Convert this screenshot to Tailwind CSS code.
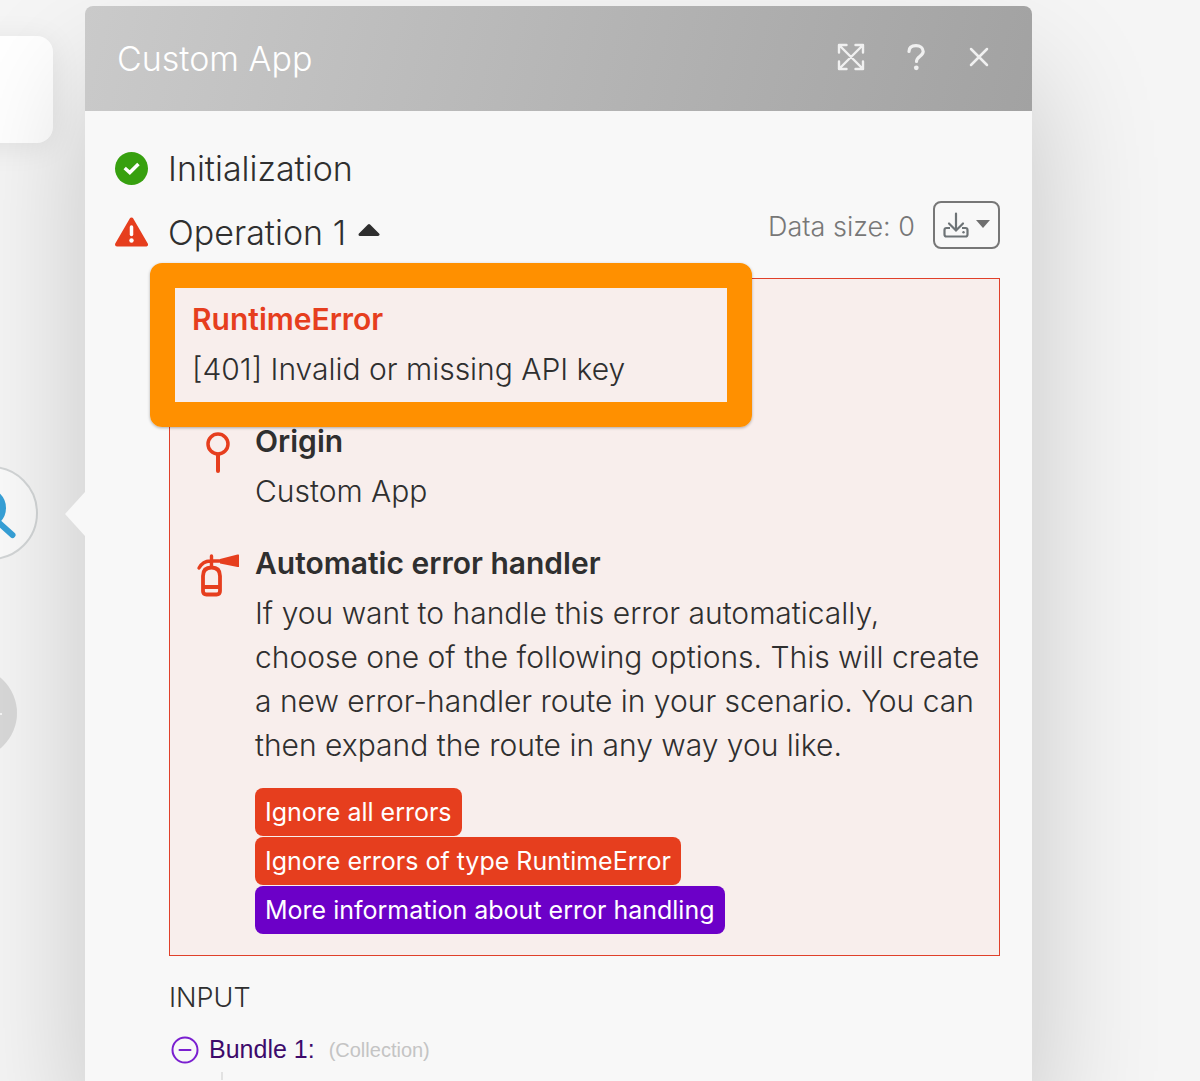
<!DOCTYPE html>
<html lang="en">
<head>
    <meta charset="UTF-8">
    <meta name="viewport" content="width=device-width, initial-scale=1.0">
    <title>Custom App</title>
    <script src="https://cdn.jsdelivr.net/npm/@tailwindcss/browser@4"></script>
</head>
<body class="relative min-h-screen flex bg-[#f5f5f5] text-[#2f2f2f] font-['Inter',sans-serif] overflow-x-hidden">
    <!-- scenario canvas behind the panel -->
    <div class="absolute -left-20 top-9 w-[133px] h-[107px] rounded-2xl bg-white shadow-[0_4px_30px_rgba(0,0,0,0.08)]"></div>
    <div class="absolute -left-14 top-[466px] size-[94px] rounded-full bg-[#fbfbfb] border-2 border-[#d3d6d7]"></div>
    <svg class="absolute left-0 top-[480px] w-5 h-[70px]" viewBox="0 0 20 70" fill="none">
        <circle cx="-14" cy="28" r="16" stroke="#37a1d8" stroke-width="8"/>
        <path d="M-2 42L12.500 55" stroke="#37a1d8" stroke-width="6" stroke-linecap="round"/>
    </svg>
    <div class="absolute -left-[75px] top-[667px] size-[92px] rounded-full bg-[#d9d9d9]"></div>
    <div class="absolute left-0 top-[713px] size-[2px] rounded-full bg-white"></div>

    <main class="relative flex-1 flex flex-col mt-[6px] ml-[85px] mr-[168px] rounded-t-lg bg-[#f8f8f8] shadow-[0_70px_130px_rgba(0,0,0,0.2)]">
        <div class="absolute -left-5 top-[486px] w-5 h-[44px] bg-[#f8f8f8] [clip-path:polygon(100%_0,0_50%,100%_100%)]"></div>

        <header class="flex items-center justify-between h-[105px] pl-8 pr-[39px] rounded-t-lg bg-linear-[105deg] from-[#cacaca] to-[#a2a2a2] text-white">
            <h1 class="text-[34px] font-light">Custom App</h1>
            <div class="flex items-center gap-9 pb-[3px] text-[#f0f0f0]">
                <button type="button" aria-label="Expand">
                    <svg class="size-7" viewBox="0 0 28 28" fill="none" stroke="currentColor" stroke-width="2.400" stroke-linejoin="round" stroke-linecap="round">
                        <path d="M2 2L26 26M26 2L2 26M2 9.500V2H9.500M18.500 2H26V9.500M26 18.500V26H18.500M9.500 26H2V18.500"/>
                    </svg>
                </button>
                <button type="button" aria-label="Help">
                    <svg class="size-7" viewBox="0 0 28 28" fill="none">
                        <path d="M8 8.500C8 4.500 11 2.600 15 2.600C19 2.600 22.200 4.800 22.200 8.600C22.200 13 15.500 13.500 15.500 18.500" stroke="currentColor" stroke-width="3.200" stroke-linecap="round"/>
                        <circle cx="15.300" cy="24.800" r="2.400" fill="currentColor"/>
                    </svg>
                </button>
                <button type="button" aria-label="Close">
                    <svg class="size-7" viewBox="0 0 28 28" fill="none" stroke="currentColor" stroke-width="2.500" stroke-linecap="round">
                        <path d="M6 6L22 22M22 6L6 22"/>
                    </svg>
                </button>
            </div>
        </header>

        <section class="pl-[30px] pr-8 pt-8">
            <div class="flex items-center gap-5 h-[50px]">
                <svg class="size-[33px]" viewBox="0 0 33 33">
                    <circle cx="16.500" cy="16.500" r="16.500" fill="#37a00f"/>
                    <path d="M11 17.200L14.800 20.600L22.200 13.200" fill="none" stroke="#fff" stroke-width="3.500" stroke-linecap="square"/>
                </svg>
                <h2 class="text-[34px] font-light">Initialization</h2>
            </div>

            <div class="flex items-center justify-between mt-[2px] h-[60px]">
                <div class="flex items-center gap-5 pt-[14px]">
                    <svg class="w-[33px] h-[30px]" viewBox="0 0 33 30">
                        <path d="M16.500 2.500L31 27.500H2Z" fill="#e63e1e" stroke="#e63e1e" stroke-width="4" stroke-linejoin="round"/>
                        <path d="M16.500 10V17.500" stroke="#fff" stroke-width="3.500" stroke-linecap="round"/>
                        <circle cx="16.500" cy="23.500" r="2.200" fill="#fff"/>
                    </svg>
                    <button type="button" class="flex items-center gap-3 text-[34px] font-light">
                        Operation 1
                        <svg class="w-[22px] h-[18px]" viewBox="0 0 22 18">
                            <path d="M11 2.500L20 11.500H2Z" fill="#2f2f2f" stroke="#2f2f2f" stroke-width="3" stroke-linejoin="round"/>
                        </svg>
                    </button>
                </div>
                <div class="flex items-center gap-[18px]">
                    <span class="pt-1 text-[27px] font-light text-[#777]">Data size: 0</span>
                    <button type="button" aria-label="Download" class="flex items-center justify-center gap-[7px] w-[67px] h-12 border-2 border-[#777] rounded-lg text-[#6d7376]">
                        <svg class="w-[26px] h-[26px]" viewBox="0 0 26 26" fill="none" stroke="currentColor" stroke-width="2.200">
                            <path d="M13 1.500V18M6 11.500L13 18.500L20 11.500" stroke-linecap="round"/>
                            <path d="M7 16H3.500Q1.500 16 1.500 18V22.500Q1.500 24.500 3.500 24.500H22.500Q24.500 24.500 24.500 22.500V18Q24.500 16 22.500 16H19"/>
                            <circle cx="20.500" cy="20.300" r="1.200" fill="currentColor" stroke="none"/>
                        </svg>
                        <svg class="w-[14px] h-3" viewBox="0 0 14 12"><path d="M0 1H14L7 9Z" fill="#6e6e6e"/></svg>
                    </button>
                </div>
            </div>

            <div class="relative ml-[54px] mt-[23px] pl-[22px] pr-4 pt-[18px] pb-[21px] border border-[#e0402a] bg-[#f8eeec] text-[30px] font-light leading-[44px]">
                <!-- highlight frame over the error message -->
                <div class="absolute -left-5 -top-4 w-[602px] h-[164px] border-[25px] border-[#ff9000] rounded-xl shadow-[0_1px_3px_rgba(0,0,0,0.3)] pointer-events-none"></div>

                <h3 class="font-semibold text-[#e63e1e]">RuntimeError</h3>
                <p class="mt-[6px]">[401] Invalid or missing API key</p>

                <div class="flex gap-4 mt-7">
                    <svg class="shrink-0 w-[47px] h-[54px]" viewBox="0 0 47 54" fill="none" stroke="#e63e1e">
                        <circle cx="26" cy="25" r="10" stroke-width="3.500"/>
                        <path d="M26 35.500V52" stroke-width="4" stroke-linecap="round"/>
                    </svg>
                    <div>
                        <h3 class="font-semibold">Origin</h3>
                        <p class="mt-[6px]">Custom App</p>
                    </div>
                </div>

                <div class="flex gap-4 mt-7">
                    <svg class="shrink-0 w-[47px] h-[60px]" viewBox="0 0 47 60" fill="none" stroke="#e63e1e" stroke-width="3.800">
                        <path d="M11 50Q11 53.500 14.500 53.500H24.500Q28 53.500 28 50V35Q28 26.500 19.500 26.500Q11 26.500 11 35ZM11 46H28"/>
                        <path d="M19.500 15V26M7 27Q11 20 18 20H30" stroke-linecap="round" stroke-width="3.400"/>
                        <path d="M28 18L45.500 13.500Q47.500 13 47.500 15V24.500Q47.500 26.500 45.500 26L28 22.500Z" fill="#e63e1e" stroke="none"/>
                    </svg>
                    <div>
                        <h3 class="font-semibold">Automatic error handler</h3>
                        <p class="mt-[6px]">If you want to handle this error automatically, choose one of the following options. This will create a new error-handler route in your scenario. You can then expand the route in any way you like.</p>
                        <div class="flex flex-col items-start gap-px mt-[21px] text-[25px] font-normal leading-[48px] text-white">
                            <button type="button" class="h-12 px-[10px] rounded-lg bg-[#e63e1e]">Ignore all errors</button>
                            <button type="button" class="h-12 px-[10px] rounded-lg bg-[#e63e1e]">Ignore errors of type RuntimeError</button>
                            <a href="#" class="h-12 px-[10px] rounded-lg bg-[#6c00c8]">More information about error handling</a>
                        </div>
                    </div>
                </div>
            </div>

            <h4 class="ml-[54px] mt-[22px] text-[27px] leading-[40px] font-light">INPUT</h4>
            <div class="flex items-center ml-[56px] mt-[14px] h-9 font-['Liberation_Sans',sans-serif]">
                <button type="button" aria-label="Collapse bundle">
                    <svg class="size-7" viewBox="0 0 28 28" fill="none" stroke="#7a1fd0" stroke-width="2">
                        <circle cx="14" cy="14" r="12.500"/>
                        <path d="M8.500 14H19.500" stroke-linecap="round"/>
                    </svg>
                </button>
                <span class="ml-[10px] text-[25px] text-[#3d0a6b]">Bundle 1:</span>
                <span class="ml-[14px] text-[20px] text-[#c4c4c4]">(Collection)</span>
            </div>
            <div class="ml-[106px] mt-1 h-2 border-l-2 border-[#e2e2e2]"></div>
        </section>
    </main>
</body>
</html>
